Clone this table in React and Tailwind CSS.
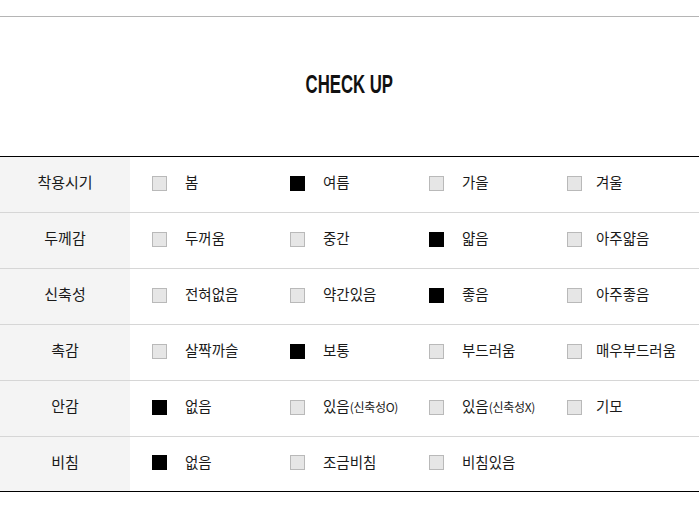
import React from "react";

const rows = [
  { title: "착용시기", items: [["봄", 0], ["여름", 1], ["가을", 0], ["겨울", 0]] },
  { title: "두께감", items: [["두꺼움", 0], ["중간", 0], ["얇음", 1], ["아주얇음", 0]] },
  { title: "신축성", items: [["전혀없음", 0], ["약간있음", 0], ["좋음", 1], ["아주좋음", 0]] },
  { title: "촉감", items: [["살짝까슬", 0], ["보통", 1], ["부드러움", 0], ["매우부드러움", 0]] },
  {
    title: "안감",
    items: [["없음", 1], ["있음", 0, "(신축성O)"], ["있음", 0, "(신축성X)"], ["기모", 0]],
  },
  { title: "비침", items: [["없음", 1], ["조금비침", 0], ["비침있음", 0]] },
];

const Box = ({ on }) =>
  on ? (
    <span className="block w-[15px] h-[15px] bg-black shrink-0" />
  ) : (
    <span className="block w-[15px] h-[15px] bg-[#e6e6e6] border border-[#b9b9b9] shrink-0" />
  );

export default function App() {
  return (
    <div
      className="w-[699px] h-[507px] bg-white text-[#1a1a1a]"
      style={{ fontFamily: '"Noto Sans CJK KR", "Noto Sans", sans-serif' }}
    >
      <div className="pt-[16px]">
        <div className="border-t border-[#b5b5b5] h-[140px] flex items-center justify-center">
          <h2
            className="text-[25px] font-bold text-[#111] scale-x-[0.67] pb-[3px]"
            style={{ fontFamily: '"Liberation Sans", Arial, sans-serif' }}
          >
            CHECK UP
          </h2>
        </div>
        <div className="border-t border-b border-black">
          {rows.map((row, i) => (
            <div
              key={row.title}
              className={
                i < rows.length - 1
                  ? "flex h-[56px] border-b border-[#d6d6d6]"
                  : "flex h-[54px]"
              }
            >
              <div className="w-[130px] bg-[#f4f4f4] flex items-center justify-center text-[15px] pb-[4px]">
                {row.title}
              </div>
              <div className="flex-1 grid grid-cols-[138px_139px_138px_1fr] pl-[22px] items-center pb-[3px]">
                {row.items.map(([label, on, small], j) => (
                  <div
                    key={j}
                    className={j === 3 ? "flex items-center gap-[14px]" : "flex items-center gap-[18px]"}
                  >
                    <Box on={on} />
                    <span className="text-[14.5px] leading-none whitespace-nowrap pb-[1px]">
                      {label}
                      {small && <span className="text-[12px] tracking-[-0.3px]">{small}</span>}
                    </span>
                  </div>
                ))}
              </div>
            </div>
          ))}
        </div>
      </div>
    </div>
  );
}
